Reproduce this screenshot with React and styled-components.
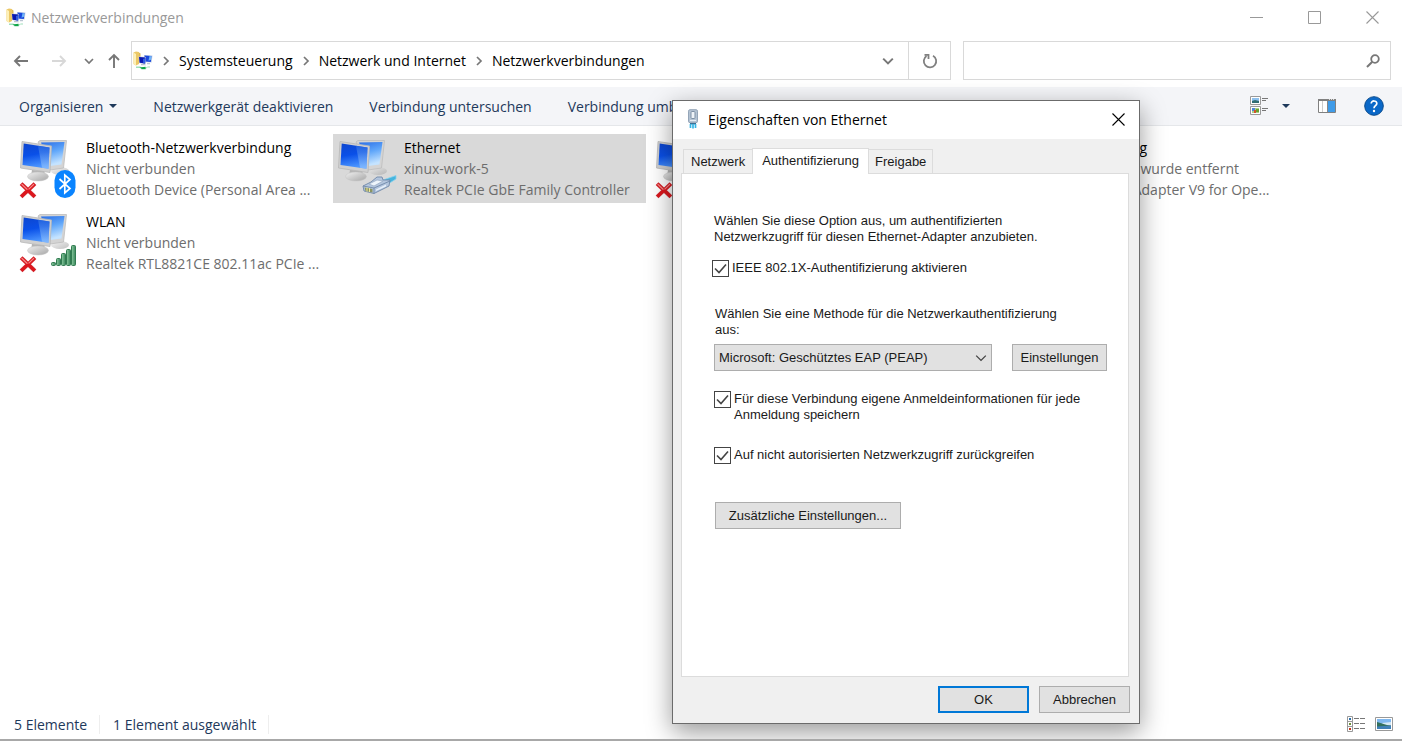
import React, { useState } from 'react';
import styled, { createGlobalStyle } from 'styled-components';

const connections = [
  {
    id: 1,
    name: 'Bluetooth-Netzwerkverbindung',
    status: 'Nicht verbunden',
    device: 'Bluetooth Device (Personal Area ...',
    type: 'bluetooth',
    offline: true,
  },
  {
    id: 2,
    name: 'Ethernet',
    status: 'xinux-work-5',
    device: 'Realtek PCIe GbE Family Controller',
    type: 'cable',
  },
  { id: 3, type: 'cable', offline: true },
  {
    id: 4,
    name: 'LAN-Verbindung',
    status: 'Netzwerkkabel wurde entfernt',
    device: 'TAP-Windows Adapter V9 for Ope...',
    type: 'cable',
    offline: true,
  },
  {
    id: 5,
    name: 'WLAN',
    status: 'Nicht verbunden',
    device: 'Realtek RTL8821CE 802.11ac PCIe ...',
    type: 'wifi',
    offline: true,
  },
];

const path = ['Systemsteuerung', 'Netzwerk und Internet', 'Netzwerkverbindungen'];

const commands = [
  'Netzwerkgerät deaktivieren',
  'Verbindung untersuchen',
  'Verbindung umbenennen',
];

const tabs = ['Netzwerk', 'Authentifizierung', 'Freigabe'];

/* ---------- icons ---------- */

const FolderIcon = () => (
  <svg width='20' height='20' viewBox='0 0 20 20' aria-hidden='true'>
    <path d='M.5 1.500L3 .5l3 .5v12l-3 1.500L.5 13z' fill='#ecc866' />
    <path d='M.5 1.500L3 3v11.500L.5 13z' fill='#fdf0b8' />
    <path d='M6 1.500l1.500 1v8L6 12z' fill='#dcb958' />
    <path d='M11 4l8.500.6-.8 7-6.700-.3z' fill='#c6d3e6' />
    <path d='M11.500 4.500l7 .6-.7 5.900-5.600-.4z' fill='#1a49dd' />
    <path d='M16.500 5l2 .2-.5 3.500-2.500 1z' fill='#6db4f8' />
    <path d='M5.500 5.500l7.500.6-.4 6.900-6.100-.8z' fill='#c6cfe0' />
    <path d='M6 6l6.500.6-.4 6-5.500-.8z' fill='#0a18b0' />
    <path d='M10 8l2.400-1-.3 5.600-2-.3z' fill='#2f5de0' />
    <path d='M8 13h4l1 1.300H8zM14 12h3v1.300h-3z' fill='#bcc5d2' />
    <path d='M3 15.500h4l2 .8h4l2-.8h2v1h-3L12.500 18.500H8.500l-1-1.500H3z' fill='#9fe0bb' />
    <path d='M6.500 16.500l6-.7V18H9z' fill='#12a548' />
  </svg>
);

const Arrow = ({ turn = 0 }) => (
  <svg width='16' height='16' viewBox='0 0 16 16' aria-hidden='true'>
    <path
      d='M15 8H1.500M7 3L2 8L7 13'
      transform={`rotate(${turn} 8 8)`}
      fill='none'
      stroke='currentColor'
      strokeWidth='1.900'
    />
  </svg>
);

const Chevron = ({ turn = 0, size = 10, weight = 1.7 }) => (
  <svg width={size} height={size} viewBox='0 0 10 10' aria-hidden='true'>
    <path
      d='M1 3l4 4l4-4'
      transform={`rotate(${turn} 5 5)`}
      fill='none'
      stroke='currentColor'
      strokeWidth={weight}
    />
  </svg>
);

const Caret = () => (
  <svg width='8' height='4' viewBox='0 0 8 4' aria-hidden='true'>
    <path d='M0 0h8L4 4z' fill='#1e395b' />
  </svg>
);

const RefreshIcon = () => (
  <svg width='16' height='16' viewBox='0 0 16 16' aria-hidden='true'>
    <path
      d='M11 2.700A6.200 6.200 0 1 1 4.500 3M2.500 1.800H6.500V6'
      fill='none'
      stroke='#808080'
      strokeWidth='1.800'
    />
  </svg>
);

const SearchIcon = () => (
  <svg width='14' height='14' viewBox='0 0 14 14' aria-hidden='true'>
    <g fill='none' stroke='#777'>
      <circle cx='9' cy='5' r='3.800' strokeWidth='1.800' />
      <path d='M6.300 7.700L1 13' strokeWidth='2' />
    </g>
  </svg>
);

const CloseIcon = () => (
  <svg width='13' height='13' viewBox='0 0 13 13' aria-hidden='true'>
    <path d='M.5.5l12 12M12.500.5l-12 12' stroke='currentColor' strokeWidth='1.100' />
  </svg>
);

const ViewIcon = () => (
  <svg width='18' height='20' viewBox='0 0 18 20' aria-hidden='true'>
    <g fill='#fff' stroke='#999'>
      <path d='M.5.5h10v8H.5zM.5 10.500h10v8H.5z' />
    </g>
    <path d='M2 2h7v5H2z' fill='#8fc1ee' />
    <path d='M2 5l3-1 4 1v2H2z' fill='#2f6d73' />
    <path d='M2 12h7v5H2z' fill='#a9cf86' />
    <path d='M2 12h3v3H2z' fill='#4f86d8' />
    <path d='M4 14h2v3H4z' fill='#d3532d' />
    <path d='M6 13h3v3H6z' fill='#69a22f' />
    <path d='M12 2.500h6M12 4.500h4M12 12.500h6M12 14.500h4' stroke='#777' />
  </svg>
);

const PaneIcon = () => (
  <svg width='18' height='14' viewBox='0 0 18 14' aria-hidden='true'>
    <path d='M.5.5h17v13H.5z' fill='#fff' stroke='#808080' />
    <path d='M0 0h18v2H0z' fill='#808080' />
    <path d='M11 .5h1M13 .5h1M15 .5h1' stroke='#ddd' />
    <path d='M4.500 2v11' stroke='#ccc' />
    <path d='M9.500 2v11' stroke='#888' />
    <path d='M10 2h7v11h-7z' fill='#3f9be8' />
  </svg>
);

const HelpIcon = () => (
  <svg width='20' height='20' viewBox='0 0 20 20' aria-hidden='true'>
    <circle cx='10' cy='10' r='9.300' fill='#0a68c8' stroke='#0b4c8e' />
    <path
      d='M7.200 7.600c0-3.600 5.800-3.400 5.600 0c-.1 2-2.800 2.200-2.800 4.600'
      fill='none'
      stroke='#fff'
      strokeWidth='1.700'
    />
    <circle cx='10' cy='15' r='1.200' fill='#fff' />
  </svg>
);

const DetailsIcon = () => (
  <svg width='18' height='16' viewBox='0 0 18 16' aria-hidden='true'>
    <path d='M.5.5h5v15h-5zM.5 5.500h5M.5 10.500h5' fill='#fff' stroke='#999' />
    <path d='M2 2h2v2H2z' fill='#2d6fa8' />
    <path d='M2 7h2v2H2z' fill='#6f8f3a' />
    <path d='M2 12h2v2H2z' fill='#c4331c' />
    <path
      d='M7 2.500h5M13 2.500h5M7 7.500h5M13 7.500h5M7 12.500h5M13 12.500h5'
      stroke='#777'
    />
  </svg>
);

const PictureIcon = () => (
  <svg width='18' height='14' viewBox='0 0 18 14' aria-hidden='true'>
    <path d='M.5.5h17v13H.5z' fill='#fff' stroke='#999' />
    <path d='M2 2h14v10H2z' fill='#7fb8f0' />
    <path d='M7 6l9-1v4H8z' fill='#d4e8f5' />
    <path d='M2 5c5 1 8 3 14 3.500V10H2z' fill='#33705d' />
    <path d='M2 9.500l14-1V12H2z' fill='#3f80b8' />
  </svg>
);

const AdapterIcon = () => (
  <svg width='12' height='20' viewBox='0 0 12 20' aria-hidden='true'>
    <rect x='1.500' y='.7' width='9' height='13' rx='1.500' fill='#b4c3d3' stroke='#94a5b8' />
    <rect x='4' y='2.500' width='4' height='7' rx='1' fill='#eef3f8' stroke='#7f91a6' />
    <path d='M3 11.500h6' stroke='#e6edf4' />
    <path d='M3 14h6v1.500H3z' fill='#3a6f96' />
    <path d='M3.500 15v4M6 15v4.500M8.500 15v4' stroke='#35b4e4' strokeWidth='1.700' />
  </svg>
);

const ConnectionIcon = ({ type, offline }) => (
  <svg width='62' height='62' viewBox='0 0 62 62' aria-hidden='true'>
    <defs>
      <linearGradient id='screen' x1='0' y1='0' x2='.2' y2='1'>
        <stop offset='0' stopColor='#0d46cf' />
        <stop offset='.5' stopColor='#0a50e8' />
        <stop offset='1' stopColor='#4b95ff' />
      </linearGradient>
      <linearGradient id='gloss' x1='0' y1='0' x2='0' y2='1'>
        <stop offset='0' stopColor='#2c6fe4' />
        <stop offset='1' stopColor='#9ccbff' />
      </linearGradient>
      <linearGradient id='backScreen' x1='0' y1='0' x2='.3' y2='1'>
        <stop offset='0' stopColor='#2a6ee6' />
        <stop offset='.5' stopColor='#5fa6fa' />
        <stop offset='1' stopColor='#c4e3ff' />
      </linearGradient>
      <linearGradient id='stand' x1='0' y1='0' x2='1' y2='1'>
        <stop offset='0' stopColor='#f0f0f0' />
        <stop offset='1' stopColor='#a6a6a6' />
      </linearGradient>
      <linearGradient id='bars' x1='0' y1='0' x2='1' y2='0'>
        <stop offset='0' stopColor='#8ccba0' />
        <stop offset='1' stopColor='#38855a' />
      </linearGradient>
    </defs>
    <ellipse cx='42' cy='34' rx='9' ry='4' fill='url(#stand)' opacity='.7' />
    <path d='M20 5L22 3.500L48.500 3.500L45.500 31L32 33z' fill='#d4d4d4' stroke='#bcbcbc' strokeWidth='.8' />
    <path d='M23 5.500l23.500-.5L43.500 27.500L32 29z' fill='url(#backScreen)' />
    <path d='M14 33l12 1l2 5H13z' fill='#b4b4b4' />
    <ellipse cx='20' cy='39.500' rx='10.500' ry='4.500' fill='url(#stand)' stroke='#c4c4c4' strokeWidth='.5' />
    <path d='M4 4.500L33.500 9L32 35.500L2.500 31z' fill='#d0d0d0' stroke='#b8b8b8' strokeWidth='.8' />
    <path d='M5.700 6.500l25.800 4L30.500 31.700L4.500 28z' fill='url(#screen)' />
    <path d='M20 8.700l11.500 1.800L30.500 31.700l-6.500-1z' fill='url(#gloss)' opacity='.65' />
    {type === 'bluetooth' && (
      <>
        <rect x='36.500' y='33' width='21' height='28' rx='10.500' fill='#0a84ff' />
        <path
          d='M41.500 42L52 51.500L46.800 56V38L52 42.500L41.500 52'
          fill='none'
          stroke='#fff'
          strokeWidth='1.700'
        />
      </>
    )}
    {type === 'wifi' && (
      <g fill='url(#bars)' stroke='#317b51'>
        <rect x='33.500' y='51.500' width='4' height='3' rx='1' />
        <rect x='38.500' y='47.500' width='4' height='7' rx='1' />
        <rect x='43.500' y='42.500' width='4' height='12' rx='1' />
        <rect x='48.500' y='38.500' width='4' height='16' rx='1' />
        <rect x='53.500' y='34.500' width='4' height='20' rx='1' />
      </g>
    )}
    {type === 'cable' && (
      <g strokeLinejoin='round'>
        <path d='M47 43l13-4.500v3.500l-8 5z' fill='#45b5de' stroke='#8ad1ec' strokeWidth='.8' />
        <path d='M27 49l8-4l6-5l5 0l1 3l7 0l-1 6l-15 7.500l-10-2.500z' fill='#b4c6de' stroke='#7088a8' strokeWidth='.9' />
        <path d='M27 49l11 2l16-7M38 51v5.500' fill='none' stroke='#7088a8' strokeWidth='.9' />
        <path d='M33 47l8-4l6 1l-9 5z' fill='#eef5fc' stroke='#8ba0bb' strokeWidth='.6' />
        <path d='M28.500 50.500l8 1.500v3.500l-7-1.500z' fill='#8b9563' />
        <path d='M31 50.500v4M33.500 51v4' stroke='#ece59a' />
        <path d='M40 52.500l10-5v2l-10 4.500z' fill='#e6effa' />
      </g>
    )}
    {offline && (
      <g fill='none' strokeLinecap='square'>
        <path d='M4.500 48l11 10.500M15.500 48L4.500 58.500' stroke='#d1323a' strokeWidth='4' />
        <path d='M4.500 48l11 10.500M15.500 48L4.500 58.500' stroke='#dd161c' strokeWidth='2.800' />
        <path d='M4 47.500l5 4.700M15.500 47.500L11 52' stroke='#f58a8a' strokeWidth='1.200' />
      </g>
    )}
  </svg>
);

/* ---------- page ---------- */

const App = () => {
  const [selected, setSelected] = useState(2);
  const [activeTab, setActiveTab] = useState('Authentifizierung');

  return (
    <Window>
      <GlobalStyle />
      <TitleBar>
        <FolderIcon />
        <WindowTitle>Netzwerkverbindungen</WindowTitle>
        <WindowButton aria-label='Minimieren'>
          <svg width='13' height='13' viewBox='0 0 13 13'>
            <path d='M0 6.500h13' stroke='currentColor' />
          </svg>
        </WindowButton>
        <WindowButton aria-label='Maximieren'>
          <svg width='13' height='13' viewBox='0 0 13 13'>
            <path d='M.5.5h12v12H.5z' fill='none' stroke='currentColor' />
          </svg>
        </WindowButton>
        <WindowButton aria-label='Schließen'>
          <CloseIcon />
        </WindowButton>
      </TitleBar>

      <AddressRow>
        <NavButtons>
          <NavButton $width={30} aria-label='Zurück'>
            <Arrow />
          </NavButton>
          <NavButton $width={46} $faded aria-label='Vorwärts'>
            <Arrow turn={180} />
          </NavButton>
          <NavButton $width={16} aria-label='Verlauf'>
            <Chevron />
          </NavButton>
          <NavButton $width={34} aria-label='Nach oben'>
            <Arrow turn={90} />
          </NavButton>
        </NavButtons>
        <AddressBox>
          <FolderIcon />
          {path.map((part) => (
            <React.Fragment key={part}>
              <Separator>
                <Chevron turn={-90} />
              </Separator>
              <Crumb href='#'>{part}</Crumb>
            </React.Fragment>
          ))}
          <Spacer />
          <NavButton $width={40} aria-label='Vorherige Orte'>
            <Chevron size={12} />
          </NavButton>
          <RefreshButton aria-label='Aktualisieren'>
            <RefreshIcon />
          </RefreshButton>
        </AddressBox>
        <SearchBox>
          <SearchInput type='text' aria-label='Suchen' />
          <SearchIcon />
        </SearchBox>
      </AddressRow>

      <Toolbar>
        <Command>
          Organisieren <Caret />
        </Command>
        {commands.map((command) => (
          <Command key={command}>{command}</Command>
        ))}
        <Spacer />
        <ToolGroup $gap={28}>
          <ToolGroup $gap={14}>
            <IconButton aria-label='Ansicht ändern'>
              <ViewIcon />
            </IconButton>
            <IconButton aria-label='Weitere Optionen'>
              <Caret />
            </IconButton>
          </ToolGroup>
          <IconButton aria-label='Vorschaufenster'>
            <PaneIcon />
          </IconButton>
          <IconButton aria-label='Hilfe'>
            <HelpIcon />
          </IconButton>
        </ToolGroup>
      </Toolbar>

      <ConnectionList>
        {connections.map(({ id, name, status, device, type, offline }) => (
          <Connection
            key={id}
            $selected={selected === id}
            onClick={() => setSelected(id)}
          >
            <ConnectionIcon type={type} offline={offline} />
            <ConnectionText>
              <ConnectionName>{name}</ConnectionName>
              <ConnectionInfo>{status}</ConnectionInfo>
              <ConnectionInfo>{device}</ConnectionInfo>
            </ConnectionText>
          </Connection>
        ))}
      </ConnectionList>

      <StatusBar>
        <StatusText>5 Elemente</StatusText>
        <StatusText>1 Element ausgewählt</StatusText>
        <Spacer />
        <ToolGroup $gap={10}>
          <IconButton aria-label='Details'>
            <DetailsIcon />
          </IconButton>
          <IconButton aria-label='Große Symbole'>
            <PictureIcon />
          </IconButton>
        </ToolGroup>
      </StatusBar>

      <Dialog role='dialog' aria-labelledby='dialog-title'>
        <DialogHeader>
          <AdapterIcon />
          <DialogTitle id='dialog-title'>Eigenschaften von Ethernet</DialogTitle>
          <DialogClose aria-label='Dialog schließen'>
            <CloseIcon />
          </DialogClose>
        </DialogHeader>
        <TabList role='tablist'>
          {tabs.map((tab) => (
            <Tab
              key={tab}
              role='tab'
              aria-selected={activeTab === tab}
              $active={activeTab === tab}
              onClick={() => setActiveTab(tab)}
            >
              {tab}
            </Tab>
          ))}
        </TabList>
        <TabPanel role='tabpanel'>
          <Paragraph>
            Wählen Sie diese Option aus, um authentifizierten
            <br />
            Netzwerkzugriff für diesen Ethernet-Adapter anzubieten.
          </Paragraph>
          <CheckRow $top={15}>
            <CheckField text='IEEE 802.1X-Authentifizierung aktivieren' />
          </CheckRow>
          <MethodLabel htmlFor='method'>
            Wählen Sie eine Methode für die Netzwerkauthentifizierung
            <br />
            aus:
          </MethodLabel>
          <MethodRow>
            <SelectWrap>
              <Select id='method'>
                <option>Microsoft: Geschütztes EAP (PEAP)</option>
              </Select>
              <SelectArrow>
                <Chevron size={12} weight={1.1} />
              </SelectArrow>
            </SelectWrap>
            <Button $width={95}>Einstellungen</Button>
          </MethodRow>
          <CheckRow $top={20} $indent={2}>
            <CheckField
              text={
                <>
                  Für diese Verbindung eigene Anmeldeinformationen für jede
                  <br />
                  Anmeldung speichern
                </>
              }
            />
          </CheckRow>
          <CheckRow $top={24} $indent={2}>
            <CheckField text='Auf nicht autorisierten Netzwerkzugriff zurückgreifen' />
          </CheckRow>
          <ExtraRow>
            <Button $width={186}>Zusätzliche Einstellungen...</Button>
          </ExtraRow>
        </TabPanel>
        <DialogFooter>
          <Button $width={91} $primary>
            OK
          </Button>
          <Button $width={91}>Abbrechen</Button>
        </DialogFooter>
      </Dialog>
    </Window>
  );
};

const CheckField = ({ text }) => (
  <CheckLabel>
    <CheckWrap>
      <CheckInput type='checkbox' defaultChecked />
      <CheckMark viewBox='0 0 17 17' aria-hidden='true'>
        <path d='M3 8.500l4 4l7-8' fill='none' stroke='#444' strokeWidth='1.600' />
      </CheckMark>
    </CheckWrap>
    <span>{text}</span>
  </CheckLabel>
);

const GlobalStyle = createGlobalStyle`
  * {
    box-sizing: border-box;
  }

  body {
    margin: 0;
    background: #fff;
    font-family: 'Open Sans', 'Noto Sans', sans-serif;
    font-size: 14px;
  }

  button, input, select {
    margin: 0;
    padding: 0;
    border: 0;
    background: none;
    color: inherit;
    font: inherit;
  }

  svg {
    display: block;
    flex: none;
  }
`;

const Window = styled.div`
  position: relative;
  display: flex;
  flex-direction: column;
  min-height: 100vh;
  overflow: hidden;
  border-bottom: 2px solid #a8a8a8;
`;

const Spacer = styled.div`
  flex: 1;
`;

const TitleBar = styled.header`
  display: flex;
  align-items: center;
  height: 35px;
  padding: 0 1px 0 6px;
  color: #999;
`;

const WindowTitle = styled.h1`
  flex: 1;
  margin: 0 0 0 5px;
  font-size: 14px;
  font-weight: 400;
`;

const WindowButton = styled.button`
  display: flex;
  align-items: center;
  justify-content: center;
  width: 58px;
  height: 35px;
`;

const AddressRow = styled.div`
  display: grid;
  grid-template-columns: 131px 820fr 440fr;
  align-items: start;
  height: 52px;
  padding: 6px 11px 0 0;
`;

const NavButtons = styled.nav`
  display: flex;
  align-items: center;
  height: 39px;
  padding-left: 6px;
`;

const NavButton = styled.button`
  display: flex;
  align-items: center;
  justify-content: center;
  width: ${({ $width }) => $width}px;
  height: 37px;
  color: ${({ $faded }) => ($faded ? '#d8d8d8' : '#777')};
`;

const AddressBox = styled.div`
  display: flex;
  align-items: center;
  height: 39px;
  padding-left: 1px;
  border: 1px solid #d9d9d9;
`;

const Separator = styled.span`
  display: flex;
  justify-content: center;
  width: 26px;
  color: #777;
`;

const Crumb = styled.a`
  color: #000;
  text-decoration: none;
`;

const RefreshButton = styled.button`
  display: flex;
  align-items: center;
  justify-content: center;
  width: 42px;
  height: 37px;
  border-left: 1px solid #d9d9d9;
`;

const SearchBox = styled.div`
  display: flex;
  align-items: center;
  height: 39px;
  margin-left: 12px;
  padding-right: 10px;
  border: 1px solid #d9d9d9;
`;

const SearchInput = styled.input`
  flex: 1;
  height: 100%;
  padding: 0 8px;
  outline: none;
`;

const Toolbar = styled.div`
  display: flex;
  align-items: center;
  gap: 36px;
  height: 39px;
  padding: 0 18px 0 19px;
  border-bottom: 1px solid #e5e7ea;
  background: #f4f5f8;
  color: #1e395b;
`;

const Command = styled.button`
  display: flex;
  align-items: center;
  gap: 6px;
  white-space: nowrap;
`;

const ToolGroup = styled.div`
  display: flex;
  align-items: center;
  gap: ${({ $gap }) => $gap}px;
`;

const IconButton = styled.button`
  display: flex;
  align-items: center;
`;

const ConnectionList = styled.main`
  display: grid;
  flex: 1;
  grid-template-columns: repeat(auto-fill, 313px);
  align-content: start;
  gap: 5px;
  padding: 8px 0 0 15px;
`;

const Connection = styled.div`
  display: flex;
  gap: 6px;
  height: 69px;
  padding: 3px;
  background: ${({ $selected }) => ($selected ? '#d9d9d9' : 'transparent')};
`;

const ConnectionText = styled.div`
  line-height: 21px;
  white-space: nowrap;
`;

const ConnectionName = styled.div`
  color: #000;
`;

const ConnectionInfo = styled.div`
  color: #6d6d6d;
`;

const StatusBar = styled.footer`
  display: flex;
  align-items: center;
  gap: 13px;
  height: 30px;
  padding: 0 9px 0 14px;
  color: #1e395b;
`;

const StatusText = styled.span`
  padding-right: 12px;
  border-right: 1px solid #eee;
`;

const Dialog = styled.section`
  position: absolute;
  top: 100px;
  left: 672px;
  width: 468px;
  border: 1px solid #6b6b6b;
  background: #f0f0f0;
  box-shadow: 0 8px 24px rgba(0, 0, 0, 0.4);
  color: #1a1a1a;
  font-family: 'Liberation Sans', Arial, sans-serif;
  font-size: 13px;
`;

const DialogHeader = styled.div`
  display: flex;
  align-items: center;
  height: 38px;
  padding: 0 0 2px 14px;
  background: #fff;
  color: #000;
  font-family: 'Open Sans', 'Noto Sans', sans-serif;
`;

const DialogTitle = styled.h2`
  flex: 1;
  margin: 0 0 0 9px;
  font-size: 14px;
  font-weight: 400;
`;

const DialogClose = styled.button`
  display: flex;
  align-items: center;
  justify-content: center;
  width: 42px;
  height: 36px;
`;

const TabList = styled.div`
  display: flex;
  align-items: flex-end;
  padding: 9px 10px 0;
`;

const Tab = styled.button`
  position: relative;
  z-index: ${({ $active }) => ($active ? 1 : 0)};
  height: ${({ $active }) => ($active ? 26 : 24)}px;
  margin-bottom: ${({ $active }) => ($active ? -1 : 0)}px;
  padding: ${({ $active }) => ($active ? '0 9px 2px' : '0 6px')};
  border: 1px solid #dcdcdc;
  border-bottom: 0;
  background: ${({ $active }) => ($active ? '#fff' : '#f0f0f0')};

  &:first-child {
    padding: 0 7px;
  }

  & + & {
    margin-left: -1px;
  }
`;

const TabPanel = styled.div`
  height: 504px;
  margin: 0 10px 0 8px;
  padding: 39px 21px 0 30px;
  border: 1px solid #dcdcdc;
  background: #fff;
  line-height: 16px;
  white-space: nowrap;
`;

const Paragraph = styled.p`
  margin: 0;
  padding-left: 2px;
`;

const CheckRow = styled.div`
  display: flex;
  margin-top: ${({ $top }) => $top}px;
  padding-left: ${({ $indent = 0 }) => $indent}px;
`;

const CheckLabel = styled.label`
  display: flex;
  gap: 3px;
`;

const CheckWrap = styled.span`
  position: relative;
  width: 17px;
  height: 17px;
`;

const CheckInput = styled.input`
  display: block;
  width: 17px;
  height: 17px;
  border: 1px solid #444;
  background: #fff;
  appearance: none;
`;

const CheckMark = styled.svg`
  position: absolute;
  top: 0;
  left: 0;
  width: 17px;
  height: 17px;
  pointer-events: none;

  ${CheckInput}:not(:checked) + & {
    display: none;
  }
`;

const MethodLabel = styled.label`
  display: block;
  margin-top: 29px;
  padding-left: 3px;
`;

const MethodRow = styled.div`
  display: flex;
  gap: 20px;
  margin-top: 6px;
  padding-left: 2px;
`;

const SelectWrap = styled.div`
  position: relative;
  flex: 1;
`;

const Select = styled.select`
  width: 100%;
  height: 27px;
  padding: 0 24px 0 4px;
  border: 1px solid #adadad;
  border-radius: 0;
  background: #e1e1e1;
  appearance: none;
`;

const SelectArrow = styled.span`
  position: absolute;
  top: 8px;
  right: 5px;
  color: #444;
  pointer-events: none;
`;

const Button = styled.button`
  width: ${({ $width }) => $width}px;
  height: 27px;
  border: ${({ $primary }) => ($primary ? '2px solid #0078d7' : '1px solid #adadad')};
  background: #e1e1e1;
`;

const ExtraRow = styled.div`
  margin-top: 38px;
  padding-left: 3px;
`;

const DialogFooter = styled.div`
  display: flex;
  justify-content: flex-end;
  gap: 10px;
  padding: 9px 9px 10px;
`;

export default App;
